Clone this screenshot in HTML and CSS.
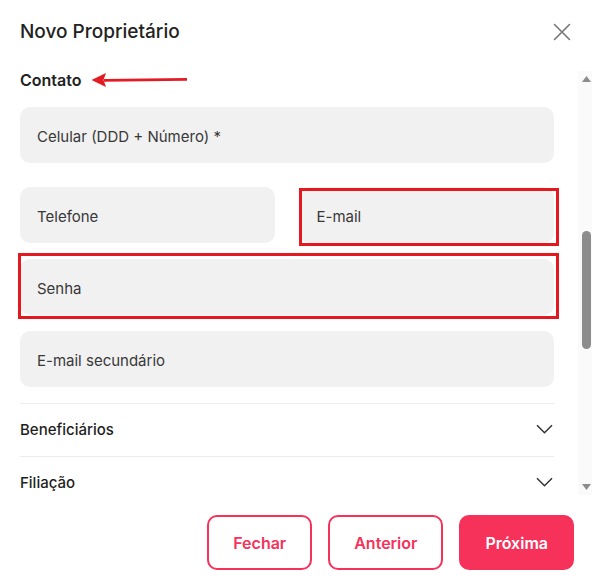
FILE: index.html
```html
<!DOCTYPE html>
<html lang="pt-BR">
<head>
<meta charset="utf-8">
<title>Novo Proprietário</title>
<link rel="stylesheet" href="styles.css">
</head>
<body>
<div class="modal">
  <header class="modal-header">
    <h2 class="modal-title">Novo Proprietário</h2>
    <button class="close-btn" aria-label="Fechar">
      <svg width="18" height="18" viewBox="0 0 18 18"><path d="M1.5 1.5 L16.5 16.5 M16.5 1.5 L1.5 16.5" stroke="#777" stroke-width="1.6" fill="none" stroke-linecap="round"/></svg>
    </button>
  </header>

  <div class="modal-body">
    <div class="body-content">
      <section class="section-contato">
        <div class="section-heading">
          <h3>Contato</h3>
          <svg class="arrow" width="97" height="16" viewBox="0 0 97 16"><path d="M13 8.3 L96 7.3" stroke="#e31b23" stroke-width="2.8" fill="none"/><polygon points="0.5,8 15,1 12.5,8 15,15" fill="#e31b23"/></svg>
        </div>
        <div class="field field-celular">Celular (DDD + Número) *</div>
        <div class="field-row">
          <div class="field">Telefone</div>
          <div class="field">E-mail<span class="annot annot-email"></span></div>
        </div>
        <div class="field">Senha<span class="annot annot-senha"></span></div>
        <div class="field">E-mail secundário</div>
      </section>

      <div class="accordion-row"><span>Beneficiários</span><svg class="chev" width="17" height="10" viewBox="0 0 17 10"><path d="M1 1.2 L8.5 8.7 L16 1.2" stroke="#333" stroke-width="1.5" fill="none"/></svg></div>
      <div class="accordion-row"><span>Filiação</span><svg class="chev" width="17" height="10" viewBox="0 0 17 10"><path d="M1 1.2 L8.5 8.7 L16 1.2" stroke="#333" stroke-width="1.5" fill="none"/></svg></div>
    </div>

    <div class="scrollbar" aria-hidden="true">
      <svg class="sb-arrow" width="9" height="6" viewBox="0 0 9 6"><polygon points="0,6 4.5,0 9,6" fill="#8c8c8c"/></svg>
      <div class="sb-thumb"></div>
      <svg class="sb-arrow sb-arrow-down" width="9" height="6" viewBox="0 0 9 6"><polygon points="0,0 4.5,6 9,0" fill="#8c8c8c"/></svg>
    </div>
  </div>

  <footer class="modal-footer">
    <button class="btn btn-outline">Fechar</button>
    <button class="btn btn-outline">Anterior</button>
    <button class="btn btn-primary">Próxima</button>
  </footer>
</div>
</body>
</html>
```

FILE: styles.css
```css
* {
  box-sizing: border-box;
  margin: 0;
  padding: 0;
}

html, body {
  width: 592px;
  height: 586px;
  overflow: hidden;
  background: #ffffff;
}

body {
  font-family: Inter, "Noto Sans", sans-serif;
  color: #222222;
}

.modal {
  display: flex;
  flex-direction: column;
  height: 586px;
}

.modal-header {
  flex: none;
  height: 71px;
  padding: 20px 21px 0 20px;
  display: flex;
  justify-content: space-between;
  align-items: flex-start;
}

.modal-title {
  font-size: 19px;
  font-weight: 500;
  line-height: 24px;
  color: #222222;
}

.close-btn {
  width: 18px;
  height: 18px;
  margin-top: 3px;
  background: none;
  border: 0;
  display: block;
}

.close-btn svg {
  display: block;
}

.modal-body {
  flex: none;
  height: 424px;
  display: flex;
  overflow: hidden;
}

.body-content {
  flex: 1;
  min-width: 0;
  padding: 0 24px 0 20px;
  margin-top: -1px;
}

.section-contato {
  padding: 0 0 16px;
}

.section-heading {
  display: flex;
  align-items: center;
  gap: 10px;
  height: 20px;
}

.section-heading h3 {
  font-size: 16px;
  font-weight: 600;
  line-height: 20px;
  color: #222222;
}

.arrow {
  display: block;
  margin-top: -1px;
}

.field {
  position: relative;
  height: 56px;
  border-radius: 10px;
  background: #f1f1f1;
  padding: 3px 17px 0;
  display: flex;
  align-items: center;
  font-size: 15px;
  color: #383838;
  margin-top: 16px;
}

.field-celular {
  margin-top: 17px;
}

.field-row {
  display: grid;
  grid-template-columns: 1fr 1fr;
  gap: 25px;
  margin-top: 16px;
}

.field-row .field {
  margin-top: 0;
}

.field-celular + .field-row {
  margin-top: 24px;
}

.annot {
  position: absolute;
  border: 3px solid #e3191f;
  pointer-events: none;
}

.annot-email {
  left: -1px;
  top: 1px;
  right: -5px;
  bottom: -3px;
}

.annot-senha {
  left: -2px;
  top: -6px;
  right: -5px;
  bottom: -4px;
}

.accordion-row {
  height: 53px;
  border-top: 1px solid #ececec;
  display: flex;
  justify-content: space-between;
  align-items: center;
  font-size: 15px;
  font-weight: 500;
  color: #1e1e1e;
  padding: 0 1px 2px 0;
}

.chev {
  display: block;
}

.scrollbar {
  flex: none;
  width: 14px;
  background: #fafafa;
  display: flex;
  flex-direction: column;
  align-items: flex-start;
  padding: 5px 0 5px 4px;
}

.sb-arrow {
  display: block;
  flex: none;
}

.sb-thumb {
  flex: none;
  width: 9px;
  height: 118px;
  margin-top: 149px;
  border-radius: 4.5px;
  background: #8c8c8c;
}

.sb-arrow-down {
  margin-top: auto;
}

.modal-footer {
  flex: none;
  display: flex;
  justify-content: flex-end;
  gap: 16px;
  padding: 20px 18px 0 20px;
}

.btn {
  height: 55px;
  border: 2px solid #f6315a;
  border-radius: 10px;
  padding: 0 24px;
  font-family: Inter, "Noto Sans", sans-serif;
  font-size: 16px;
  font-weight: 600;
  background: #ffffff;
  color: #f6315a;
}

.btn-primary {
  background: #f6315a;
  color: #ffffff;
}
```
